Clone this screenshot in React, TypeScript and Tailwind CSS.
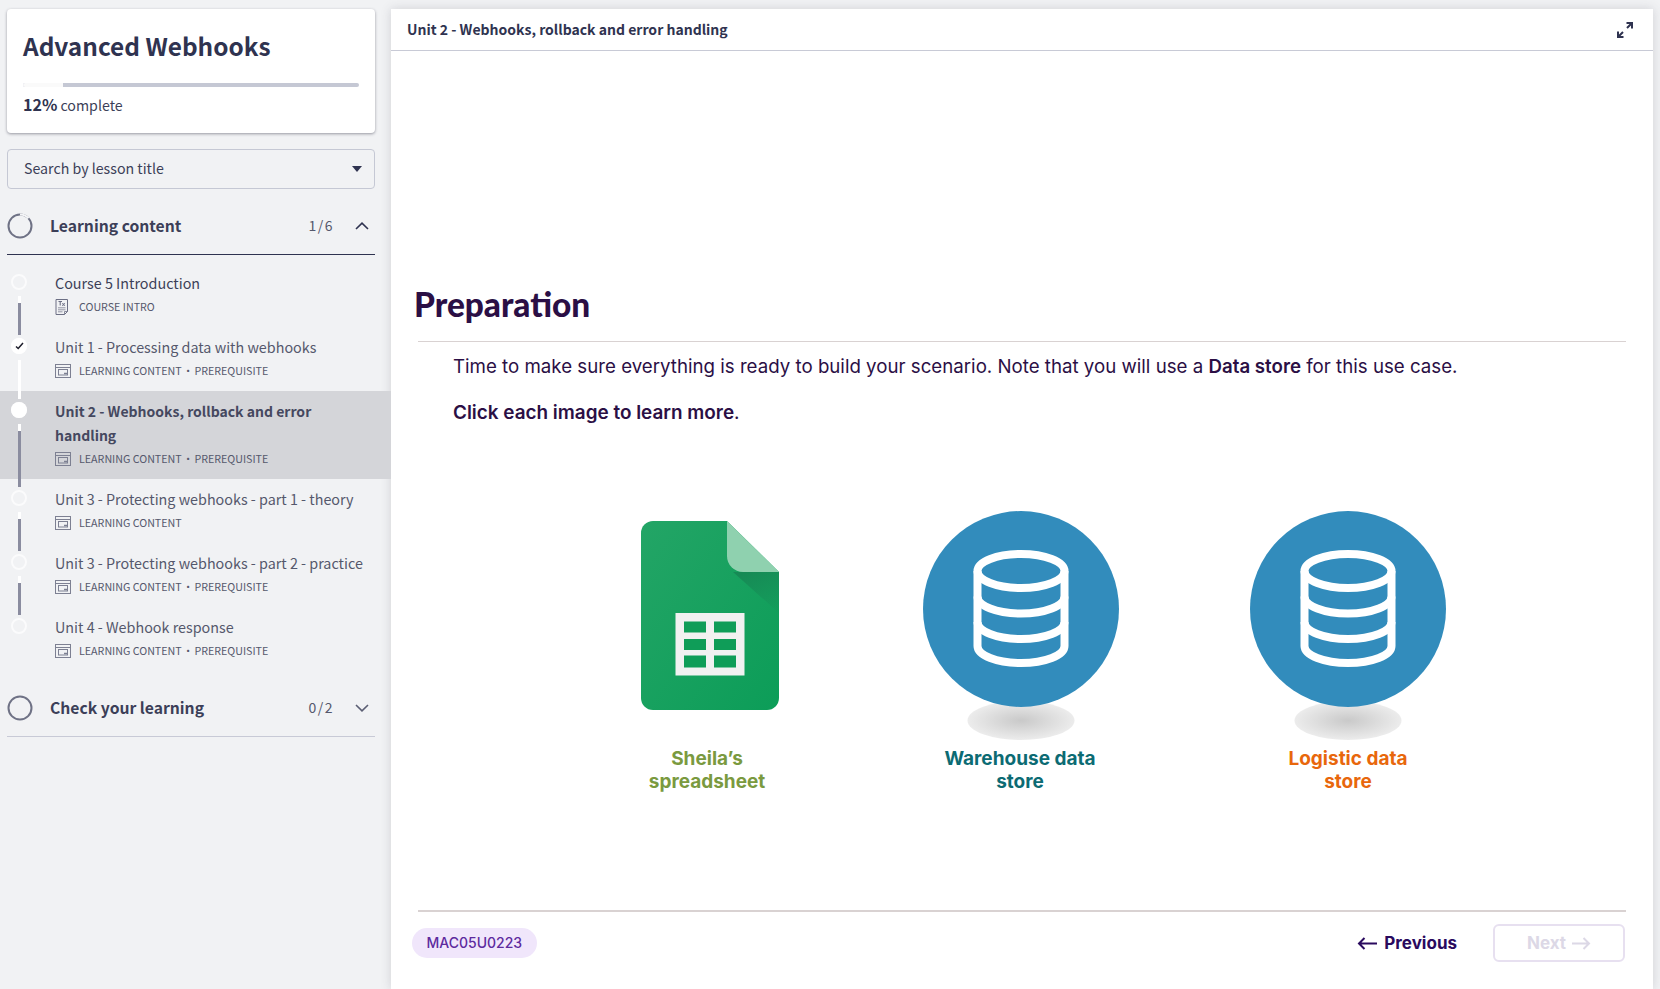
import React from 'react';

const LESSONS = [
  { title: 'Course 5 Introduction', meta: ['COURSE INTRO'], icon: 'doc', dot: 'empty', line: 'dark' },
  { title: 'Unit 1 - Processing data with webhooks', meta: ['LEARNING CONTENT', 'PREREQUISITE'], icon: 'win', dot: 'done', line: 'light' },
  { title: 'Unit 2 - Webhooks, rollback and error handling', meta: ['LEARNING CONTENT', 'PREREQUISITE'], icon: 'win', dot: 'current', line: 'dark', active: true },
  { title: 'Unit 3 - Protecting webhooks - part 1 - theory', meta: ['LEARNING CONTENT'], icon: 'win', dot: 'empty', line: 'dark' },
  { title: 'Unit 3 - Protecting webhooks - part 2 - practice', meta: ['LEARNING CONTENT', 'PREREQUISITE'], icon: 'win', dot: 'empty', line: 'dark' },
  { title: 'Unit 4 - Webhook response', meta: ['LEARNING CONTENT', 'PREREQUISITE'], icon: 'win', dot: 'empty', line: 'none' },
];

function WindowIcon() {
  return (
    <svg width="16" height="14" viewBox="0 0 16 14" fill="none" stroke="#7d8092" strokeWidth="1">
      <rect x="0.5" y="0.5" width="15" height="13" />
      <path d="M0.5 3.5H15.5" />
      <rect x="3.5" y="5.5" width="9" height="5.5" />
      <path d="M9 9.5H12.5" strokeWidth="1.5" />
    </svg>
  );
}

function DocIcon() {
  return (
    <svg width="14" height="16" viewBox="0 0 14 16" fill="none" stroke="#6c6f84" strokeWidth="1">
      <path d="M1 0.5H12.5V12.5L9.5 15.5H1Z" />
      <path d="M9.5 15.5V12.5H12.5" strokeWidth="0.8" />
      <path d="M3.5 2.5H7M5.2 2.5V6.5M7.3 4.4L9.8 6.6M9.8 4.4L7.3 6.6" strokeWidth="1.1" />
      <path d="M3 8.8H10.5M3 10.8H10.5M3 12.8H7.5" strokeWidth="0.7" />
    </svg>
  );
}

function Ring({ progress }: { progress?: boolean }) {
  return (
    <svg width="26" height="26" viewBox="0 0 26 26" fill="none" className="shrink-0">
      <circle cx="13" cy="13" r="11.5" stroke="#6f7285" strokeWidth="2" />
      {progress && <path d="M13 1.5A11.5 11.5 0 0 1 21.5 5.2" stroke="#f4f5f7" strokeWidth="2.2" />}
    </svg>
  );
}

function Chevron({ up }: { up?: boolean }) {
  return (
    <svg width="14" height="8" viewBox="0 0 14 8" fill="none" stroke={up ? '#2f3350' : '#5b5e73'} strokeWidth="1.6">
      <path d={up ? 'M1 7L7 1.2L13 7' : 'M1 1L7 6.8L13 1'} />
    </svg>
  );
}

function SectionHeader({ title, count, up, progress, dark }: { title: string; count: string; up?: boolean; progress?: boolean; dark?: boolean }) {
  return (
    <div className={`ml-[7px] mr-[16px] h-[66px] pt-2 flex items-center border-b ${dark ? 'border-[#2f3350]' : 'border-[#c8cad6]'}`}>
      <Ring progress={progress} />
      <span className="ml-[17px] flex-1 text-[15.7px] font-semibold text-[#3c3f58]">{title}</span>
      <span className="text-[14px] tracking-[1.5px] text-[#55586c]">{count}</span>
      <span className="ml-[21px] mr-[6px] flex"><Chevron up={up} /></span>
    </div>
  );
}

function LessonRow({ lesson }: { lesson: (typeof LESSONS)[number] }) {
  return (
    <div className={`relative pl-[55px] pr-[21px] pt-2 pb-2 ${lesson.active ? 'bg-[#d4d5d9]' : ''}`}>
      <div className="absolute left-[11px] top-[11px] w-4 h-4 rounded-full flex items-center justify-center border-2 border-white/70 bg-transparent">
        {lesson.dot === 'current' && <div className="w-4 h-4 rounded-full bg-white shrink-0" />}
        {lesson.dot === 'done' && (
          <div className="w-4 h-4 rounded-full bg-white shrink-0 flex items-center justify-center">
            <svg width="9" height="8" viewBox="0 0 9 8" fill="none" stroke="#1d1d2b" strokeWidth="1.5"><path d="M1 4.5L3.2 6.5L8 1" /></svg>
          </div>
        )}
      </div>
      {lesson.line !== 'none' && (
        <div className={`absolute z-10 left-[18px] top-[33px] -bottom-[8px] w-[3px] ${lesson.line === 'dark' ? 'bg-[#8a8c9f] border-t-[7px] border-white' : 'bg-white'}`} />
      )}
      <div className={`leading-6 ${lesson.active ? 'text-[14px] font-semibold text-[#45485f]' : lesson.meta[0] === 'COURSE INTRO' ? 'text-[14.35px] text-[#3c3f58]' : 'text-[14.35px] text-[#55586c]'}`}>
        {lesson.title}
      </div>
      <div className="h-6 flex items-center text-[10.7px] text-[#55586c]">
        <span className="w-6 flex">{lesson.icon === 'doc' ? <DocIcon /> : <WindowIcon />}</span>
        <span>{lesson.meta[0]}</span>
        {lesson.meta[1] && <span className="mx-[1px]">·</span>}
        {lesson.meta[1] && <span>{lesson.meta[1]}</span>}
      </div>
    </div>
  );
}

function SheetIcon() {
  return (
    <svg width="138" height="189" viewBox="0 0 138 189">
      <defs>
        <linearGradient id="sheetFill" x1="0" y1="0" x2="1" y2="1">
          <stop offset="0" stopColor="#23a566" />
          <stop offset="1" stopColor="#0c9d58" />
        </linearGradient>
        <linearGradient id="sheetFold" x1="0.3" y1="0" x2="0.8" y2="1">
          <stop offset="0" stopColor="#168a55" />
          <stop offset="1" stopColor="#168a55" stopOpacity="0.1" />
        </linearGradient>
      </defs>
      <path d="M12 0H86L138 51V177A12 12 0 0 1 126 189H12A12 12 0 0 1 0 177V12A12 12 0 0 1 12 0Z" fill="url(#sheetFill)" />
      <path d="M92 51H138V92Z" fill="url(#sheetFold)" />
      <path d="M86 0L138 51H102A16 16 0 0 1 86 35Z" fill="#8fd1af" />
      <rect x="34.5" y="92" width="69" height="62.5" fill="#f1f1f1" />
      <path d="M43 100.5H65V111.5H43ZM73 100.5H95V111.5H73ZM43 118H65V129H43ZM73 118H95V129H73ZM43 134.5H65V146.5H43ZM73 134.5H95V146.5H73Z" fill="#0f9d58" />
    </svg>
  );
}

function DataStoreIcon({ id }: { id: string }) {
  return (
    <svg width="196" height="230" viewBox="0 0 196 230" fill="none">
      <defs>
        <radialGradient id={id} cx="0.5" cy="0.5" r="0.5">
          <stop offset="0" stopColor="#c9c9c9" />
          <stop offset="1" stopColor="#ececec" />
        </radialGradient>
      </defs>
      <ellipse cx="98" cy="209.5" rx="53.5" ry="19.5" fill={`url(#${id})`} />
      <circle cx="98" cy="98" r="98" fill="#328cbc" />
      <g stroke="#ffffff" strokeWidth="8">
        <ellipse cx="98" cy="60" rx="43.5" ry="17" />
        <path d="M54.5 60V135A43.5 17 0 0 0 141.5 135V60" />
        <path d="M54.5 85.5A43.5 17 0 0 0 141.5 85.5" />
        <path d="M54.5 111A43.5 17 0 0 0 141.5 111" />
      </g>
    </svg>
  );
}

export default function App() {
  return (
    <div className="w-[1660px] h-[989px] overflow-hidden bg-[#f1f2f4] flex font-['Noto_Sans_CJK_SC','Source_Sans_Pro',sans-serif]">
      <aside className="w-[391px] shrink-0 pt-[9px]">
        <div className="ml-[7px] mr-[16px] h-[124px] bg-white rounded-[4px] shadow-[0_1px_3px_rgba(40,40,60,0.45)] px-[16px] pt-[18px]">
          <h1 className="text-[24.4px] leading-[38px] font-semibold text-[#2f3350] whitespace-nowrap">Advanced Webhooks</h1>
          <div className="mt-[18px] h-[4px] rounded-full bg-[#c5c8d4] overflow-hidden">
            <div className="h-full w-[12%] bg-[#fafafa]" />
          </div>
          <div className="mt-[5px] text-[14.2px] leading-6 text-[#3c3f58]">
            <span className="text-[16px] font-semibold text-[#2f3350]">12%</span> complete
          </div>
        </div>

        <div className="ml-[7px] mr-[16px] mt-4 h-10 rounded-[4px] border border-[#c5c8d4] px-4 flex items-center justify-between text-[14.2px] text-[#3c3f58]">
          <span className="-mt-px">Search by lesson title</span>
          <span className="w-0 h-0 mr-[-4px] border-x-[5px] border-x-transparent border-t-[6px] border-t-[#2f3350]" />
        </div>

        <SectionHeader title="Learning content" count="1/6" up progress dark />
        <div className="pt-2">
          {LESSONS.map((l) => (
            <LessonRow key={l.title} lesson={l} />
          ))}
        </div>
        <SectionHeader title="Check your learning" count="0/2" />
      </aside>

      <main className="mt-[9px] w-[1262px] h-[980px] shrink-0 bg-white shadow-[0_0_10px_rgba(60,60,80,0.18)] flex flex-col">
        <header className="h-[42px] shrink-0 border-b border-[#c8cad6] pl-4 pr-5 flex items-center justify-between">
          <span className="text-[14px] font-semibold text-[#2f3350] -mt-px">Unit 2 - Webhooks, rollback and error handling</span>
          <svg width="16" height="16" viewBox="0 0 16 16" fill="none" stroke="#2f3350" strokeWidth="2">
            <path d="M9.5 1H15V6.5M15 1L10 6M1 9.5V15H6.5M1 15L6 10" />
          </svg>
        </header>

        <div className="flex-1 flex flex-col font-['Inter',sans-serif] text-[#2b0f45]">
          <h2 className="mt-[231px] ml-[23px] text-[33.4px] leading-[44px] font-black font-['Lato',sans-serif]">Preparation</h2>
          <div className="mt-[15px] mx-[27px] h-px bg-[#d9d2d2]" />
          <p className="mt-[12px] ml-[62px] text-[18.7px] leading-[25px]">
            Time to make sure everything is ready to build your scenario. Note that you will use a <strong className="font-semibold">Data store</strong> for this use case.
          </p>
          <p className="mt-[21px] ml-[62px] text-[18.9px] leading-[25px]">
            <strong className="font-semibold">Click each image to learn more</strong>.
          </p>

          <div className="mt-[86px] ml-[166px] flex items-start">
            <div className="w-[300px] flex flex-col items-center text-[19px] leading-[23px] font-bold text-[#7a9a3f] text-center">
              <div className="h-[230px] pt-[10px] pl-[6px]"><SheetIcon /></div>
              <div className="mt-[6px] w-[150px]">Sheila’s spreadsheet</div>
            </div>
            <div className="w-[328px] flex flex-col items-center text-[19px] leading-[23px] font-bold text-[#0c6b73] text-center">
              <DataStoreIcon id="shadowA" />
              <div className="mt-[6px] mr-[2px] w-[170px]">Warehouse data store</div>
            </div>
            <div className="w-[326px] flex flex-col items-center text-[19px] leading-[23px] font-bold text-[#e8670c] text-center">
              <DataStoreIcon id="shadowB" />
              <div className="mt-[6px] w-[150px]">Logistic data store</div>
            </div>
          </div>

          <div className="mt-auto mx-[27px] h-[2px] bg-[#d9d2d2]" />
          <div className="h-[77px] pl-[21px] pr-[28px] flex items-center justify-between">
            <span className="h-[30px] -mt-[16px] px-[14.5px] rounded-full bg-[#f0e6fb] text-[#5d2a9e] text-[14px] font-medium flex items-center">MAC05U0223</span>
            <div className="flex items-center -mt-[14px]">
              <button className="flex items-center gap-[6px] text-[17px] font-bold text-[#2a0a5e]">
                <svg width="21" height="13" viewBox="0 0 21 13" fill="none" stroke="#2a0a5e" strokeWidth="2"><path d="M20 6.5H2M7.5 1L2 6.5L7.5 12" /></svg>
                Previous
              </button>
              <button className="ml-[36px] -mt-[2px] pt-[2px] w-[132px] h-[38px] rounded-[6px] border-2 border-[#e7e0f0] flex items-center justify-center gap-[5px] text-[17px] font-bold text-[#dcd8e6]">
                Next
                <svg width="20" height="13" viewBox="0 0 20 13" fill="none" stroke="#dcd8e6" strokeWidth="2"><path d="M1 6.5H18M12.5 1L18 6.5L12.5 12" /></svg>
              </button>
            </div>
          </div>
        </div>
      </main>
    </div>
  );
}
